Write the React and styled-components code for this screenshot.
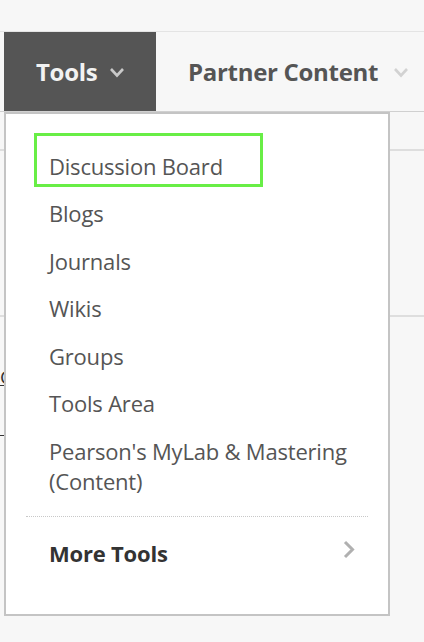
import React from 'react';
import styled, {createGlobalStyle} from 'styled-components';

const GlobalStyle = createGlobalStyle`
  html, body {
    margin: 0;
    padding: 0;
    background-color: #f7f7f7;
    font-family: "Open Sans", "Liberation Sans", sans-serif;
  }
`;

const Page = styled.div`
  position: relative;
  width: 424px;
  height: 642px;
  overflow: hidden;
  padding-top: 31px;
  box-sizing: border-box;
`;

const NavBar = styled.nav`
  display: flex;
  height: 81px;
  border-top: 1px solid #e4e4e4;
  border-bottom: 1px solid #d0d0d0;
  box-sizing: border-box;
  padding-left: 4px;
`;

const Tab = styled.div`
  display: flex;
  align-items: center;
  gap: ${props => props.active ? '12px' : '15px'};
  width: ${props => props.active ? '152px' : 'auto'};
  box-sizing: border-box;
  padding-left: 32px;
  background-color: ${props => props.active ? '#555555' : 'transparent'};
  color: ${props => props.active ? '#f2f2f2' : '#555555'};
  font-size: 24px;
  font-weight: 700;
  letter-spacing: -0.3px;
  height: 79px;
`;

const Chevron = styled.svg`
  width: 16px;
  height: 11px;
  margin-top: 2px;
  flex-shrink: 0;
`;

const Content = styled.div`
  display: flex;
  flex-direction: column;
`;

const ContentRow = styled.div`
  height: ${props => props.h}px;
  border-bottom: 2px solid #dedede;
`;

const LinkList = styled.div`
  display: flex;
  flex-direction: column;
  gap: 26px;
  padding-top: 48px;
  width: 4px;
  overflow: hidden;
  white-space: nowrap;
`;

const CourseLink = styled.span`
  font-size: 19px;
  line-height: 24px;
  color: #333333;
  text-decoration: underline;
`;

const Dropdown = styled.div`
  position: absolute;
  top: 112px;
  left: 4px;
  width: 386px;
  height: 504px;
  box-sizing: border-box;
  background-color: #ffffff;
  border: 2px solid #c4c4c4;
  padding: 28px 20px 0 20px;
  display: flex;
  flex-direction: column;
`;

const Highlight = styled.div`
  position: absolute;
  left: 28px;
  top: 19px;
  width: 229px;
  height: 54px;
  box-sizing: border-box;
  border: 3px solid #68ee46;
  pointer-events: none;
`;

const MenuItem = styled.div`
  display: flex;
  align-items: center;
  justify-content: space-between;
  padding: 8.75px 0 8.75px 23px;
  font-size: 22px;
  line-height: 30px;
  font-weight: ${props => props.bold ? 700 : 400};
  color: ${props => props.bold ? '#333333' : '#555555'};
  letter-spacing: -0.2px;
`;

const Separator = styled.div`
  border-top: 1px dotted #c8c8c8;
  margin: 11px 0 13px 0;
`;

const ArrowRight = styled.svg`
  width: 14px;
  height: 19px;
  margin-right: 12px;
  margin-top: -8px;
`;

const DownIcon = ({color}) => (
  <Chevron viewBox="0 0 16 11">
    <polyline points="2,2 8,8.5 14,2" fill="none" stroke={color} strokeWidth="2.6" />
  </Chevron>
);

const tools = [
  'Discussion Board',
  'Blogs',
  'Journals',
  'Wikis',
  'Groups',
  'Tools Area',
  "Pearson's MyLab & Mastering (Content)",
];

const App = () => {
  return (
    <Page>
      <GlobalStyle/>
      <NavBar>
        <Tab active>
          Tools
          <DownIcon color="#c9c9c9"/>
        </Tab>
        <Tab>
          Partner Content
          <DownIcon color="#d2d2d2"/>
        </Tab>
      </NavBar>

      <Content>
        <ContentRow h={37}/>
        <ContentRow h={164}/>
        <LinkList>
          <CourseLink>C</CourseLink>
          <CourseLink>{'\u00a0'}</CourseLink>
        </LinkList>
      </Content>

      <Dropdown>
        <Highlight/>
        {tools.map(tool => (
          <MenuItem key={tool}>{tool}</MenuItem>
        ))}
        <Separator/>
        <MenuItem bold>
          More Tools
          <ArrowRight viewBox="0 0 14 19">
            <polyline points="3,2 10.5,9.5 3,17" fill="none" stroke="#b0b0b0" strokeWidth="3" />
          </ArrowRight>
        </MenuItem>
      </Dropdown>
    </Page>
  );
};

export default App;
